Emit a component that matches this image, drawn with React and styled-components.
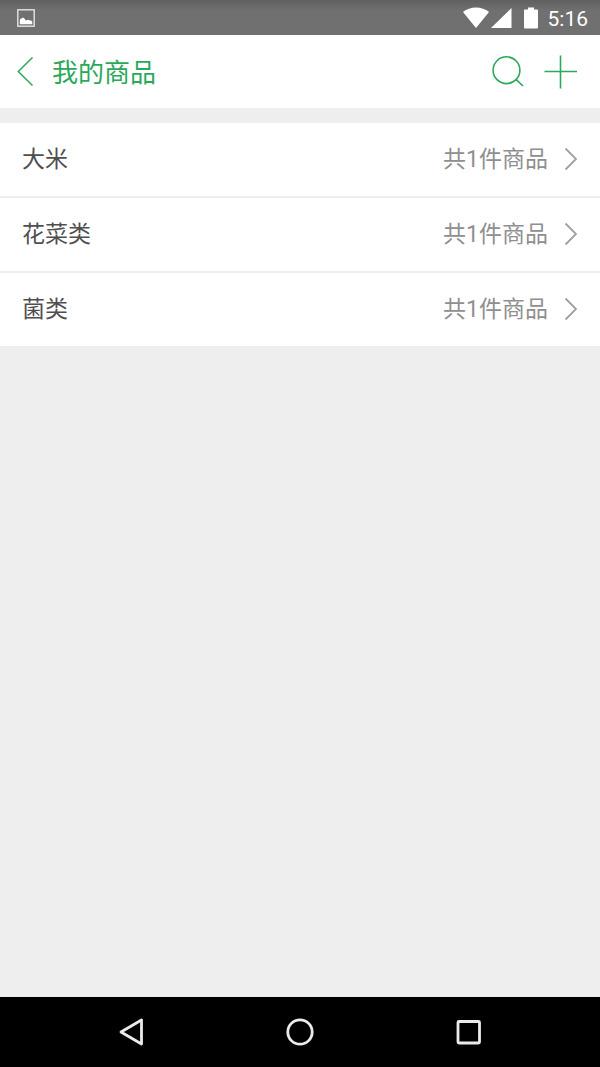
import React from "react";
import styled, { createGlobalStyle } from "styled-components";

const GlobalStyle = createGlobalStyle`
  * {
    box-sizing: border-box;
  }
  body {
    margin: 0;
    background-color: #eee;
    font-family: Roboto, "Noto Sans CJK SC", sans-serif;
  }
`;

const Screen = styled.div`
  display: flex;
  flex-direction: column;
  min-height: 100vh;
`;

const StatusBar = styled.div`
  display: flex;
  align-items: center;
  justify-content: space-between;
  height: 35px;
  padding: 0 12px 0 17px;
  background: linear-gradient(#606060, #707070 30%, #707070);
  color: #fff;
  svg {
    display: block;
  }
`;

const StatusGroup = styled.div`
  display: flex;
  align-items: center;
`;

const Clock = styled.time`
  margin-left: 10px;
  padding-top: 2px;
  font-size: 21px;
  line-height: 24px;
`;

const Battery = styled.svg`
  margin-left: 12px;
`;

const Signal = styled.svg`
  margin-left: 2px;
`;

const Header = styled.header`
  display: flex;
  align-items: center;
  height: 73px;
  padding: 0 22px 0 16px;
  background-color: #fff;
  color: #2ba85c;
`;

const Title = styled.h1`
  flex: 1;
  margin: 0 0 0 16px;
  padding-top: 2px;
  font-size: 26px;
  font-weight: 400;
  line-height: 38px;
`;

const IconButton = styled.button`
  display: flex;
  margin: 0 0 0 ${(props) => props.$space || 0};
  padding: 0;
  border: 0;
  background: none;
  color: inherit;
  cursor: pointer;
`;

const List = styled.ul`
  display: flex;
  flex-direction: column;
  gap: 2px;
  margin: 15px 0 0;
  padding: 0;
  list-style: none;
`;

const Row = styled.a`
  display: flex;
  align-items: center;
  height: 73px;
  padding: 0 22px;
  background-color: #fff;
  color: #4f4f4f;
  font-size: 23px;
  line-height: 34px;
  text-decoration: none;
`;

const Name = styled.span`
  flex: 1;
`;

const Count = styled.span`
  margin-right: 16px;
  color: #8f8f8f;
`;

const Chevron = styled.svg`
  margin-bottom: 1px;
`;

const NavBar = styled.nav`
  display: flex;
  height: 70px;
  margin-top: auto;
  padding: 0 48px;
  background-color: #000;
`;

const NavButton = styled.button`
  display: flex;
  flex: 1;
  align-items: center;
  justify-content: center;
  padding: 0;
  border: 0;
  background: none;
  color: #ebebeb;
  cursor: pointer;
`;

const categories = [
  { name: "大米", count: 1 },
  { name: "花菜类", count: 1 },
  { name: "菌类", count: 1 },
];

function App() {
  return (
    <>
      <GlobalStyle />
      <Screen>
        <StatusBar>
          <svg width="18" height="18" viewBox="0 0 18 18">
            <rect x="0.8" y="0.8" width="16.4" height="16.4" fill="none" stroke="#e4e4e4" strokeWidth="1.4" />
            <path
              d="M2.800 15.200v-3.600c0-1.400 1-2 1.700-2 .6-1.100 2.600-1 3.200.5.500 1.100 1.200 1.500 2 1.200.9-.9 2.500-.9 3 .2 1.400-.2 2.600.5 2.600 1.700v2z"
              fill="#fff"
            />
          </svg>
          <StatusGroup>
            <svg width="26" height="22" viewBox="0 0 26 22">
              <path d="M0 5C7-1 19-1 26 5L13 21z" fill="#fff" />
            </svg>
            <Signal width="21" height="22" viewBox="0 0 21 22">
              <path d="M20.5 1v20H0z" fill="#fff" />
            </Signal>
            <Battery width="14" height="22" viewBox="0 0 14 22">
              <path
                d="M4 .5h6v2h3a1 1 0 0 1 1 1v17a1 1 0 0 1-1 1H1a1 1 0 0 1-1-1v-17a1 1 0 0 1 1-1h3z"
                fill="#fff"
              />
            </Battery>
            <Clock>5:16</Clock>
          </StatusGroup>
        </StatusBar>
        <Header>
          <IconButton aria-label="返回">
            <svg width="20" height="32" viewBox="0 0 20 32" fill="none" stroke="currentColor" strokeWidth="1.5">
              <path d="M16.5 1.500L2.300 15.500 16.500 29.500" />
            </svg>
          </IconButton>
          <Title>我的商品</Title>
          <IconButton aria-label="搜索">
            <svg width="34" height="34" viewBox="0 0 34 34" fill="none" stroke="currentColor" strokeWidth="1.6">
              <circle cx="15.5" cy="15.2" r="13.4" />
              <path d="M25 24.300L32 31" />
            </svg>
          </IconButton>
          <IconButton aria-label="添加" $space="19px">
            <svg width="34" height="34" viewBox="0 0 34 34" fill="none" stroke="currentColor" strokeWidth="1.6">
              <path d="M16.500 .5v33M.5 16.500H33" />
            </svg>
          </IconButton>
        </Header>
        <List>
          {categories.map((category) => (
            <li key={category.name}>
              <Row href="#">
                <Name>{category.name}</Name>
                <Count>共{category.count}件商品</Count>
                <Chevron width="14" height="24" viewBox="0 0 14 24" fill="none" stroke="#a0a0a0" strokeWidth="1.8">
                  <path d="M1.500 1.500L12 12 1.500 22.500" />
                </Chevron>
              </Row>
            </li>
          ))}
        </List>
        <NavBar>
          <NavButton aria-label="后退">
            <svg width="28" height="28" viewBox="0 0 28 28" fill="none" stroke="currentColor" strokeWidth="2.8">
              <path d="M23.500 2v24L3 14z" strokeLinejoin="round" />
            </svg>
          </NavButton>
          <NavButton aria-label="主页">
            <svg width="28" height="28" viewBox="0 0 28 28" fill="none" stroke="currentColor" strokeWidth="2.8">
              <circle cx="14" cy="14" r="12.2" />
            </svg>
          </NavButton>
          <NavButton aria-label="最近任务">
            <svg width="28" height="28" viewBox="0 0 28 28" fill="none" stroke="currentColor" strokeWidth="2.8">
              <rect x="4" y="3.5" width="21.5" height="21.5" rx="1" />
            </svg>
          </NavButton>
        </NavBar>
      </Screen>
    </>
  );
}

export default App;
